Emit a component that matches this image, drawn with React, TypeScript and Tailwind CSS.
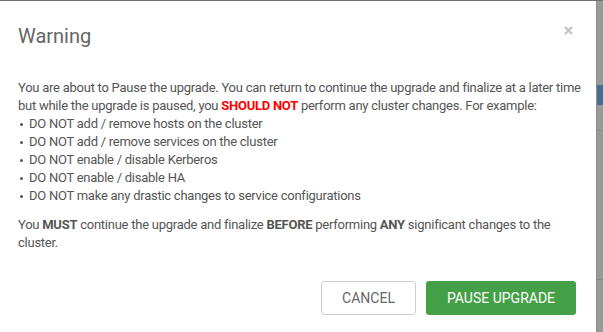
import React from "react";

export default function App() {
  const bullets = [
    "DO NOT add / remove hosts on the cluster",
    "DO NOT add / remove services on the cluster",
    "DO NOT enable / disable Kerberos",
    "DO NOT enable / disable HA",
    "DO NOT make any drastic changes to service configurations",
  ];
  return (
    <div
      className="w-[603px] h-[332px] overflow-hidden bg-[#999999] flex flex-col"
      style={{ fontFamily: "Roboto, 'Liberation Sans', sans-serif" }}
    >
      <div className="h-px bg-[#6f6f6f] shrink-0" />
      <div className="flex flex-1 min-h-0">
        <div className="w-[596px] bg-white flex flex-col">
          <div className="flex items-start justify-between pl-[18px] pr-[23px] pt-[22px] h-[78px] shrink-0">
            <h4 className="text-[20px] leading-[26px] text-[#666666] font-normal">Warning</h4>
            <button className="mt-[3px] w-[9px] h-[9px] flex items-center justify-center" aria-label="close">
              <svg width="9" height="9" viewBox="0 0 9 9">
                <path d="M1 1 L8 8 M8 1 L1 8" stroke="#c4c4c4" strokeWidth="2.4" strokeLinecap="butt" />
              </svg>
            </button>
          </div>
          <div className="pl-[18px] pr-[14px] text-[13px] leading-[18px] tracking-[-0.25px] text-[#555555]">
            <p>
              You are about to Pause the upgrade. You can return to continue the upgrade and finalize at a later time
              but while the upgrade is paused, you <span className="text-[#ff0000] font-bold">SHOULD NOT</span> perform
              any cluster changes. For example:
            </p>
            <ul>
              {bullets.map((b) => (
                <li key={b} className="flex items-center">
                  <span className="w-[3px] h-[3px] rounded-full bg-[#555555] ml-[2px] mr-[6px]" />
                  {b}
                </li>
              ))}
            </ul>
            <p className="mt-[11px]">
              You <b>MUST</b> continue the upgrade and finalize <b>BEFORE</b> performing <b>ANY</b> significant changes
              to the cluster.
            </p>
          </div>
          <div className="flex-1" />
          <div className="flex justify-end gap-[10px] pr-[20px] pb-[17px]">
            <button className="w-[95px] h-[34px] border border-[#cfcfcf] rounded-[3px] text-[14px] text-[#666666] bg-white">
              CANCEL
            </button>
            <button className="w-[150px] h-[34px] rounded-[3px] bg-[#43a047] text-white text-[14px]">
              PAUSE UPGRADE
            </button>
          </div>
        </div>
        <div className="flex-1 flex flex-col border-l border-[#8e8e8e]">
          <div className="h-[84px]" />
          <div className="h-[20px] bg-[#4c6c8e]" />
          <div className="h-[25px]" />
          <div className="h-px bg-[#8a8a8a]" />
          <div className="h-[148px]" />
          <div className="h-px bg-[#8a8a8a]" />
        </div>
      </div>
    </div>
  );
}
